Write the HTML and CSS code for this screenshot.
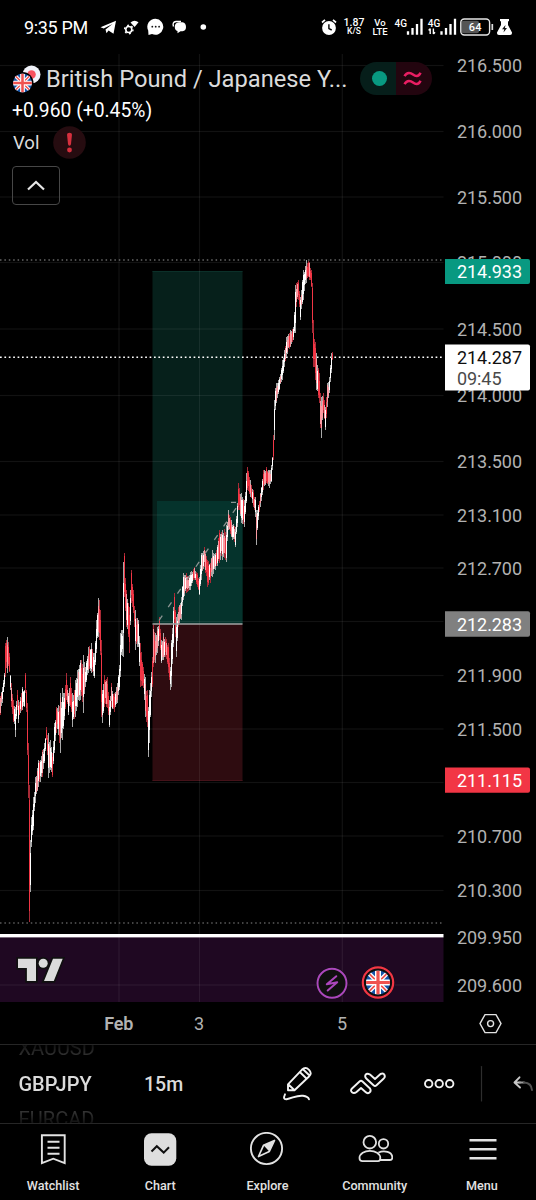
FILE: index.html
```html
<!DOCTYPE html>
<html lang="en">
<head>
<meta charset="utf-8">
<title>GBPJPY chart</title>
<link rel="stylesheet" href="styles.css">
</head>
<body>
<svg width="0" height="0" class="defs">
  <defs>
    <clipPath id="disc"><circle cx="12" cy="12" r="12"/></clipPath>
    <symbol id="gb" viewBox="0 0 24 24">
      <g clip-path="url(#disc)">
        <rect width="24" height="24" fill="#1554a8"/>
        <path d="M0 0L24 24M24 0L0 24" stroke="#fff" stroke-width="4.400"/>
        <path d="M0 0L24 24M24 0L0 24" stroke="#ef5350" stroke-width="1.700"/>
        <path d="M12 0V24M0 12H24" stroke="#fff" stroke-width="6"/>
        <path d="M12 0V24M0 12H24" stroke="#ef5350" stroke-width="3.200"/>
      </g>
    </symbol>
  </defs>
</svg>
<div class="screen">
  <header class="status">
    <span class="clock">9:35 PM</span>
    <svg class="notifs" width="110" height="20" viewBox="99 17 110 20">
      <path d="M100.500 27.300L116 20.800 113.500 33.800 108.500 30.600 106.500 33.200 105.500 29.500 112.500 24 103.700 28.600Z" fill="#fff"/>
      <circle cx="128.800" cy="29.500" r="3" fill="none" stroke="#fff" stroke-width="1.600"/>
      <circle cx="128.800" cy="29.500" r="4.200" fill="none" stroke="#fff" stroke-width="1.400" stroke-dasharray="1.800 2.600"/>
      <path d="M130.500 22.500Q134.500 19 138.500 22.300L134.600 27Z" fill="#fff"/>
      <path d="M155.500 18.800a8 8 0 1 1-3.500 15.300L148.500 35 148.200 30.500a8 8 0 0 1 7.300-11.700Z" fill="#fff"/>
      <g fill="#111"><circle cx="152.300" cy="26.700" r=".9"/><circle cx="155.700" cy="26.700" r=".9"/><circle cx="159.100" cy="26.700" r=".9"/></g>
      <path d="M173.500 26.500Q172 22 176 21.500H181" fill="none" stroke="#fff" stroke-width="1.400"/>
      <path d="M179 22.300H182.500Q186 23 186 27T182.500 31.200H180.500L177.500 33.300V31Q174.600 30.300 174.800 26.500T179 22.300Z" fill="#fff"/>
      <circle cx="203.300" cy="27" r="2.800" fill="#fff"/>
    </svg>
    <svg class="alarm" width="16" height="18" viewBox="0 0 16 18">
      <circle cx="8" cy="10" r="6.900" fill="#fff"/>
      <path d="M1 4.500L4 1.800M15 4.500L12 1.800" stroke="#fff" stroke-width="1.700"/>
      <path d="M7.900 6.200V10.600L10.700 12" fill="none" stroke="#000" stroke-width="1.400"/>
    </svg>
    <span class="duo speed"><b>1.87</b><b>K/S</b></span>
    <span class="duo volte"><b>Vo</b><b>LTE</b></span>
    <svg class="signals" width="64" height="20" viewBox="394 17 64 20">
      <g class="net"><text x="394.500" y="26.800" textLength="12.500">4G</text><text x="427.800" y="26.800" textLength="12.500">4G</text></g>
      <path d="M408 31.300v3.500M412.500 28v6.800M417 24v10.800M421.500 18.800v16M441.500 31.300v3.500M446 28v6.800M450.500 24v10.800M455 18.800v16" stroke="#fff" stroke-width="2.300"/>
      <path d="M430.200 34V28.600M428.600 30.400L430.200 28.600M433.400 28.600V34M435 32.200L433.400 34" stroke="#fff" stroke-width="1.400" fill="none"/>
    </svg>
    <svg class="battery" width="34" height="18" viewBox="1 0 34 18">
      <rect x="2.500" y="2.700" width="17.500" height="12.600" rx="2" fill="#555"/>
      <rect x="1.800" y="1" width="28.800" height="16" rx="3.500" fill="none" stroke="#e6e6e6" stroke-width="1.400"/>
      <path d="M33.300 6v6" stroke="#ddd" stroke-width="1.700"/>
      <text x="9.800" y="12.900" textLength="12.800" class="pct">64</text>
    </svg>
    <svg class="flask" width="17" height="18" viewBox="0 0 17 18">
      <path d="M4 1H13V3.200H12V7L16 14.500Q16.300 17 14 17H3Q.700 17 1 14.500L5 7V3.200H4Z" fill="#fff"/>
      <path d="M9.500 7L6 11.300H8.200L7.500 14.500 11 10H8.900Z" fill="#111"/>
    </svg>
  </header>

  <main class="chart">
    <svg class="plot" width="536" height="990" viewBox="0 54 536 990">
      <rect x="0" y="937" width="443.500" height="65" fill="#1f0822"/>
      <g fill="none">
        <rect x="152.500" y="271" width="90" height="353" fill="#06201b"/>
        <rect x="157" y="501" width="85.500" height="123" fill="#05332c"/>
        <rect x="152.500" y="624" width="90" height="157" fill="#2e0c10"/>
        <path d="M152.500 271.500H242.500" stroke="#0b3029"/>
        <path d="M152.500 780.500H242.500" stroke="#451219"/>
      </g>
      <g id="grid"></g>
      <path d="M0 260H444" class="dots" stroke="#999"/>
      <path d="M0 923H444" class="dots" stroke="#888"/>
      <path d="M0 357.200H444" class="dots last"/>
      <g id="bars" shape-rendering="crispEdges"></g>
      <path d="M159 620.500L240 502.500" stroke="#8c9492" stroke-width="1.300" stroke-dasharray="5.800 10.500" fill="none"/>
      <path d="M231 502.400h5" stroke="#8c9492" stroke-width="1.200"/>
      <path d="M152.500 624H242.500" stroke="#a3a3a3" stroke-width="1.600"/>
      <rect x="0" y="934" width="443.500" height="3.400" fill="#fff"/>
      <g id="scale" class="scale"></g>
      <path d="M445 259h83a2 2 0 0 1 2 2v21a2 2 0 0 1-2 2H445Z" fill="#089981"/>
      <path d="M445 344.500h83a2 2 0 0 1 2 2v42a2 2 0 0 1-2 2H445Z" fill="#fff"/>
      <path d="M445 611.200h83a2 2 0 0 1 2 2v21.500a2 2 0 0 1-2 2H445Z" fill="#808080"/>
      <path d="M445 767.500h83a2 2 0 0 1 2 2v21.300a2 2 0 0 1-2 2H445Z" fill="#f23645"/>
      <g class="scale tag">
        <text x="457" y="278.300" textLength="65">214.933</text>
        <text x="457" y="630.500" textLength="65">212.283</text>
        <text x="457" y="786.800" textLength="65">211.115</text>
        <text x="457" y="364.200" textLength="65" class="ink">214.287</text>
        <text x="457" y="384.700" textLength="44.500" class="count">09:45</text>
      </g>
      <g class="scale">
        <text x="104.300" y="1029.500" class="month" textLength="29">Feb</text>
        <text x="194" y="1029.500">3</text>
        <text x="337" y="1029.500">5</text>
      </g>
      <path d="M485 1014.600H496L501 1023.600 496 1032.600H485L480 1023.600Z" fill="none" stroke="#e2e2e2" stroke-width="1.400"/>
      <circle cx="490.600" cy="1023.600" r="3" fill="none" stroke="#e2e2e2" stroke-width="1.400"/>
      <path d="M18 958.800H36V981H26.900V968H18ZM53 958.800H62.700L53.800 981H44Z" fill="#dbdbdb" stroke="#101010" stroke-width="3.400" paint-order="stroke"/>
      <circle cx="43.200" cy="963.300" r="4.500" fill="#dbdbdb" stroke="#101010" stroke-width="3.400" paint-order="stroke"/>
      <circle cx="332" cy="983.300" r="16" fill="#0f0f0f"/>
      <circle cx="332" cy="983.300" r="14.500" fill="none" stroke="#ab47bc" stroke-width="2"/>
      <path d="M336.300 976.200L326.800 984.300 337.200 982.300 327.700 990.500" fill="none" stroke="#ab47bc" stroke-width="2" stroke-linejoin="round" stroke-linecap="round"/>
      <circle cx="378" cy="982.500" r="16.500" fill="#0f0f0f"/>
      <circle cx="378" cy="982.500" r="15.200" fill="none" stroke="#f23645" stroke-width="2.200"/>
      <use href="#gb" x="366" y="970.500" width="24" height="24"/>
    </svg>

    <section class="legend">
      <div class="symbol">
        <svg width="30" height="30" viewBox="12 64 30 30">
          <circle cx="31.500" cy="74.500" r="9" fill="#f0f3fa"/>
          <circle cx="31.500" cy="74.500" r="4.300" fill="#f7525f"/>
          <circle cx="22.500" cy="83" r="11" fill="#000"/>
          <use href="#gb" x="13" y="73.500" width="19" height="19"/>
        </svg>
        <h1>British Pound / Japanese Y...</h1>
        <div class="pill">
          <span class="open"><i></i></span>
          <span class="delay"><svg width="20" height="16" viewBox="0 0 20 16"><path d="M1.500 5.200C4 .500 8 2 10 3.500S15.500 6.500 17.500 1.800M1.500 13.200C4 8.500 8 10 10 11.500S15.500 14.500 17.500 9.800" fill="none" stroke="#e91e63" stroke-width="2.500"/></svg></span>
        </div>
      </div>
      <div class="change">+0.960 (+0.45%)</div>
      <div class="study">
        <span>Vol</span>
        <svg width="33" height="33" viewBox="0 0 33 33"><circle cx="16.500" cy="16.500" r="16.300" fill="#260c10"/><path d="M14 8.500Q14 6.700 16.500 6.700T19 8.500L18 18Q17.800 19.800 16.500 19.800T15 18Z" fill="#d6303e"/><circle cx="16.500" cy="24" r="2.400" fill="#d6303e"/></svg>
      </div>
      <div class="collapse"><svg width="18" height="11" viewBox="0 0 18 11"><path d="M1 9.500L9 2 17 9.500" fill="none" stroke="#e6e6e6" stroke-width="2.200"/></svg></div>
    </section>
  </main>

  <div class="toolbar">
    <div class="wheel"><span>XAUUSD</span><span class="on">GBPJPY</span><span>EURCAD</span></div>
    <span class="period">15m</span>
    <svg class="tools" width="268" height="78" viewBox="268 1045 268 78" fill="none" stroke="#f2f2f2" stroke-width="1.900" stroke-linejoin="round" stroke-linecap="round">
      <path d="M288 1084.300L301.800 1069.800Q305.500 1066.300 309 1069.800T309 1076.500L294.500 1090.300H288ZM288.500 1084.500L294 1089.800M299.800 1072L306.700 1078.700M303.300 1069.500L309 1075"/>
      <path d="M285 1094.300Q282.500 1099.600 286.500 1099.300C293 1098 297 1095 303 1095.800Q308 1096.500 309 1099.300"/>
      <path d="M352 1088.500L359.500 1081.500Q361 1080.200 362.500 1081.500L370 1088.500Q371.500 1091 369.500 1092.500T365.500 1092L361 1088 356.500 1092Q354 1094 352 1092.200T352 1088.500Z"/>
      <path d="M365.500 1074.800Q367 1072.800 370 1074.500L375 1079 380.500 1074Q383.500 1072.800 384.500 1075T383.500 1078.700L376.500 1085.300Q375 1086.500 373.500 1085.300L366.500 1078.700Q364.500 1076.800 365.500 1074.800Z"/>
      <circle cx="428.700" cy="1083.700" r="3.700"/><circle cx="439.200" cy="1083.700" r="3.700"/><circle cx="449.700" cy="1083.700" r="3.700"/>
      <path d="M481.500 1066.500V1101" stroke="#2e2e2e" stroke-width="1.200"/>
      <path d="M519.500 1077.300L514.500 1082.500 520 1087.500M515 1082.500H520" stroke="#c8c8c8"/>
      <path d="M520 1082.500H524" stroke="#9c9c9c"/><path d="M524 1082.500Q531.500 1083 532 1090" stroke="#525252"/>
    </svg>
  </div>

  <nav class="tabs">
    <a><svg width="36" height="36" viewBox="0 0 36 36" fill="none" stroke="#e2e2e2" stroke-width="1.900"><path d="M6.900 3.200H29.700V31.200L18.300 26.700 6.900 31.200ZM12.500 9.700H24.500M12.500 15.700H24.500M12.500 21.700H24.500"/></svg>Watchlist</a>
    <a><svg width="36" height="36" viewBox="0 0 36 36"><rect x="2" y="1.300" width="32.300" height="32.500" rx="7.500" fill="#dedede"/><path d="M9.500 19.500L14.800 14.200 21.700 20.600 27 15.300" fill="none" stroke="#0f0f0f" stroke-width="2"/></svg>Chart</a>
    <a><svg width="36" height="36" viewBox="0 0 36 36"><circle cx="17.500" cy="16.500" r="15.600" fill="none" stroke="#e2e2e2" stroke-width="1.900"/><path d="M25.500 8.500L20.300 19.500 9.500 24.500 14.500 13.300Z" fill="none" stroke="#e2e2e2" stroke-width="1.700" stroke-linejoin="round"/><path d="M25.500 8.500L20.300 19.500 14.500 13.300Z" fill="#e2e2e2"/></svg>Explore</a>
    <a><svg width="36" height="36" viewBox="0 0 36 36" fill="none" stroke="#e2e2e2" stroke-width="1.800"><circle cx="12.800" cy="10.200" r="6.300"/><circle cx="26.500" cy="11.800" r="4.700"/><path d="M5.500 29.100Q2.500 29.100 2.500 26C2.500 16.500 23.300 16.500 23.300 26Q23.300 29.100 21 29.100ZM21.500 20.500C27 18 35.300 19.500 35.300 25.500Q35.300 28 33 28H23"/></svg>Community</a>
    <a><svg width="36" height="36" viewBox="0 0 36 36" stroke="#e2e2e2" stroke-width="2.600"><path d="M5.500 8.200H32.500M5.500 17.200H32.500M5.500 26.200H32.500"/></svg>Menu</a>
  </nav>
</div>
<script src="chart.js"></script>
</body>
</html>
```

FILE: styles.css
```css
* { box-sizing: border-box; }
body { margin: 0; background: #000; font-family: Roboto, "Liberation Sans", sans-serif; }
.defs { position: absolute; }
.screen { width: 536px; height: 1200px; overflow: hidden; display: flex; flex-direction: column; background: #000; color: #dbdbdb; }
svg { display: block; flex: none; }

.status { height: 54px; padding-left: 24px; display: flex; align-items: center; color: #fff; flex: none; }
.clock { width: 75px; font-size: 18px; white-space: nowrap; letter-spacing: -.35px; }
.alarm { margin-left: 112px; }
.duo { display: flex; flex-direction: column; align-items: center; }
.duo b { font-weight: 500; line-height: 9px; }
.speed { width: 22px; margin-left: 6px; font-size: 10.500px; }
.speed b + b { font-size: 8.500px; }
.volte { width: 18px; margin-left: 6px; font-size: 9.500px; }
.signals { margin-left: 5px; }
.net { font: 500 10px Roboto, sans-serif; fill: #fff; }
.battery { margin-left: 2px; }
.pct { font: 500 11px Roboto, sans-serif; fill: #fff; }
.flask { margin-left: 2px; }

.chart { position: relative; height: 990px; flex: none; }
.dots { stroke-width: 1.200; stroke-dasharray: 1.500 2.900; }
.last { stroke: #fff; stroke-width: 1.500; stroke-dasharray: 1.700 2.700; }
.scale { font: 18px Roboto, sans-serif; fill: #b2b2b2; }
.tag { fill: #fff; }
.ink { fill: #0f0f0f; }
.count { fill: #4a4a4a; }
.month { font-weight: 600; }

.legend { position: absolute; left: 12px; top: 8px; width: 425px; }
.symbol { display: flex; align-items: center; height: 33px; }
.symbol h1 { margin: 0 0 0 4px; width: 314px; font-size: 23.700px; font-weight: 400; line-height: 33px; padding-top: 1px; white-space: nowrap; color: #dbdbdb; }
.pill { display: flex; width: 72px; height: 33px; border-radius: 17px; overflow: hidden; flex: none; }
.pill span { width: 36px; display: flex; align-items: center; justify-content: center; }
.open { background: #061e1a; }
.open i { width: 15px; height: 15px; border-radius: 50%; background: #089981; margin-left: 3px; }
.pill .delay { background: #23050f; padding-right: 3px; }
.change { height: 31px; line-height: 31px; font-size: 19.300px; color: #fff; }
.study { display: flex; align-items: center; height: 33px; font-size: 18.500px; }
.study span { width: 41px; padding-left: 1px; }
.collapse { margin-top: 7px; width: 48px; height: 39px; border: 1.500px solid #474747; border-radius: 4px; display: flex; align-items: center; justify-content: center; }

.toolbar { height: 79px; border-top: 1px solid #262626; display: flex; align-items: center; flex: none; overflow: hidden; }
.wheel { width: 144px; padding: 1px 0 0 18.500px; height: 78px; overflow: hidden; display: flex; flex-direction: column; justify-content: center; font-size: 20px; -webkit-mask-image: linear-gradient(transparent -6px, #000 24px, #000 54px, transparent 84px); mask-image: linear-gradient(transparent -6px, #000 24px, #000 54px, transparent 84px); }
.wheel span { height: 35.500px; line-height: 35.500px; flex: none; color: #585858; }
.wheel .on { color: #dbdbdb; font-weight: 500; }
.period { width: 124px; font-size: 19.500px; font-weight: 500; }

.tabs { height: 77px; border-top: 1px solid #262626; display: flex; flex: none; }
.tabs a { width: 107.200px; padding: 8px 1px 0 0; display: flex; flex-direction: column; align-items: center; gap: 9px; font-size: 12.600px; line-height: 18px; font-weight: 500; color: #e2e2e2; }
```

FILE: chart.js
```js
var NS = "http://www.w3.org/2000/svg";
function add(parent, name, attrs, text) {
  var el = document.createElementNS(NS, name);
  for (var k in attrs) el.setAttribute(k, attrs[k]);
  if (text) el.textContent = text;
  parent.appendChild(el);
}

// Price scale: label and its height on the plot
var levels = [
  ["216.500", 65.5], ["216.000", 131.5], ["215.500", 197], ["215.000", 262.5],
  ["214.500", 329], ["214.000", 395.5], ["213.500", 461.5], ["213.100", 515],
  ["212.700", 568], ["", 621.5], ["211.900", 675.5], ["211.500", 729],
  ["", 782.5], ["210.700", 836], ["210.300", 890.5], ["209.950", 937.5], ["209.600", 985]
];
var grid = document.getElementById("grid"), scale = document.getElementById("scale");
levels.forEach(function (l) {
  if (l[0] !== "209.950") add(grid, "rect", { x: 0, y: l[1] - .6, width: 443.5, height: 1.2, fill: "rgba(255,255,255,.07)" });
  if (l[0]) add(scale, "text", { x: 457, y: l[1] + 6.6, textLength: 65 }, l[0]);
});
[119, 199.5, 342.3].forEach(function (x) {
  add(grid, "rect", { x: x - .6, y: 54, width: 1.2, height: 948, fill: "rgba(255,255,255,.07)" });
});

// High / low envelope: x, high, low
var env = [
  0,696,715, 2,687,703, 4,673,687, 5,643,677, 7,637,673, 8.5,642,663, 10,675,690, 11,683,707, 13,700,722,
  15,707,737, 17,690,710, 18,700,723, 20,697,713, 22,687,710, 24,690,707, 25,673,693, 26,690,712, 27,703,755,
  28,743,798, 29,785,922, 30,840,892, 31,817,847, 33,797,830, 35,777,803, 38,760,787, 40,760,782, 42,750,777,
  44,743,763, 46,727,740, 48,733,778, 50,740,770, 52,753,777, 54,723,753, 56,707,733, 58,705,735, 60,693,753,
  62,688,740, 64,693,720, 66,673,700, 68,693,715, 70,677,707, 72,693,727, 75,680,717, 77,670,707, 80,660,700,
  83,655,713, 85,667,687, 88,647,673, 91,643,673, 94,653,678, 96,620,653, 98,598,637, 99,600,640, 100,610,655,
  101,640,717, 102,690,723, 104,675,707, 107,677,708, 109,700,727, 111,683,707, 114,693,712, 117,683,703,
  119,665,690, 120,633,677, 121,630,655, 122,630,656, 123,562,657, 124,553,597, 126,590,627, 128,603,637,
  129,607,653, 130,590,625, 131,570,603, 133,590,613, 135,610,650, 138,620,647, 140,643,687, 143,667,688,
  145,677,717, 147,690,727, 148,707,757, 149,690,743, 150,683,717, 152,657,687, 153,625,667, 155,633,663,
  157,627,653, 159,617,640, 161,640,663, 163,633,660, 165,637,657, 168,643,673, 170,667,690, 171,640,687,
  173,607,647, 174,593,623, 176,617,657, 178,607,627, 181,597,620, 183,573,600, 186,573,593, 190,572,590,
  194,567,580, 197,573,587, 199,577,595, 201,553,580, 204,547,567, 207,560,587, 210,563,583, 212,550,577,
  215,553,570, 219,530,563, 222,530,560, 226,525,562, 228,510,530, 231,520,537, 235,527,547, 237,503,527,
  238,483,510, 241,493,523, 244,500,527, 246,473,503, 247,467,490, 250,480,497, 253,490,507, 255,497,517,
  256,510,545, 258,505,520, 260,493,507, 263,470,490, 266,467,483, 269,470,488, 271,465,482, 272,457,470,
  273,435,460, 274,400,440, 275,388,410, 276,383,403, 279,377,390, 282,360,380, 284,350,367, 286,337,357,
  290,330,347, 293,327,340, 294,312,333, 295,285,333, 296,283,307, 298,280,300, 300,297,320, 303,270,300,
  306,260,283, 309,262,280, 311,270,287, 312,283,333, 313,320,367, 316,353,390, 319,373,403, 320,393,428,
  321,397,438, 323,393,413, 325,407,430, 327,383,407, 329,377,393, 331,353,373, 332,352,360
];
var seed = 77;
function rnd() { seed = (seed * 16807) % 2147483647; return seed / 2147483647; }
var bars = document.getElementById("bars");
for (var x = 0, i = 0; x <= 332; x++) {
  while (i + 5 < env.length && env[i + 3] <= x) i += 3;
  var j = i + 3 < env.length ? i + 3 : i;
  var t = j > i ? (x - env[i]) / (env[j] - env[i]) : 0;
  var hi = env[i + 1] + (env[j + 1] - env[i + 1]) * t, lo = env[i + 2] + (env[j + 2] - env[i + 2]) * t;
  var slope = j > i ? (env[j + 1] + env[j + 2] - env[i + 1] - env[i + 2]) / 2 / (env[j] - env[i]) : 0;
  var range = lo - hi, exact = Math.abs(x - env[i]) < .6;
  if (!exact) { hi += rnd() * range * .2; lo -= rnd() * range * .2; range = lo - hi; }
  var p = Math.max(.08, Math.min(.93, .45 + slope * .07)), r = rnd();
  var down = r < p, mixed = rnd() < .42 && Math.abs(slope) < 9;
  add(bars, "rect", { x: x, y: Math.round(hi), width: 1, height: Math.round(range), fill: down ? "#a82a36" : "#a8a8a8" });
  var a = hi + range * (.06 + rnd() * .22), b = lo - range * (.06 + rnd() * .22);
  add(bars, "rect", { x: x, y: Math.round(a), width: 1, height: Math.max(2, Math.round(b - a)), fill: mixed ? "#fa9aa2" : down ? "#f23645" : "#fff" });
}
```
